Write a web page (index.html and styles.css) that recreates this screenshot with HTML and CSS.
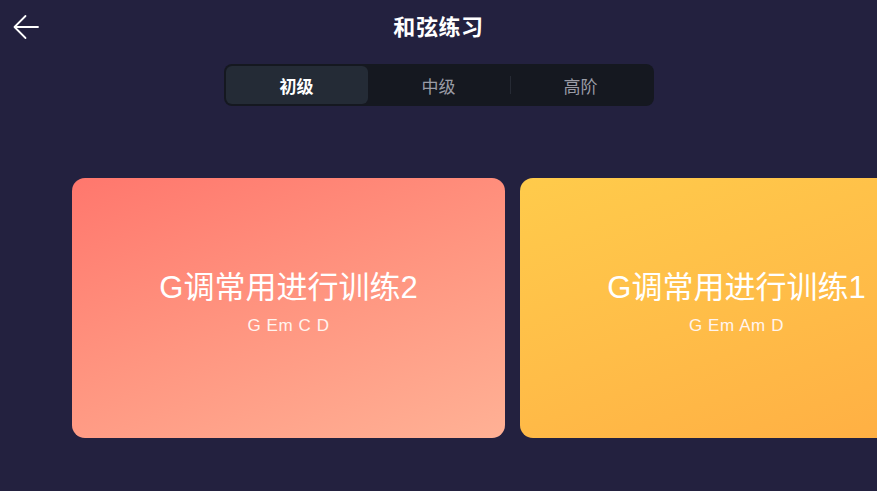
FILE: index.html
```html
<!DOCTYPE html>
<html lang="zh">
<head>
<meta charset="utf-8">
<title>和弦练习</title>
<link rel="stylesheet" href="styles.css">
</head>
<body>
<div class="page">
  <header class="topbar">
    <div class="back">
      <svg width="26" height="26" viewBox="0 0 26 26" fill="none" stroke="#ffffff" stroke-width="1.8" stroke-linecap="round" stroke-linejoin="round">
        <path d="M25 13 H2"/>
        <path d="M12.5 2 L1.5 13 L12.5 24"/>
      </svg>
    </div>
    <h1 class="title">和弦练习</h1>
    <div class="spacer"></div>
  </header>

  <nav class="tabs">
    <div class="tab active">初级</div>
    <div class="tab">中级</div>
    <div class="tab divided">高阶</div>
  </nav>

  <section class="cards">
    <div class="card coral">
      <div class="card-title">G调常用进行训练2</div>
      <div class="card-sub">G Em C D</div>
    </div>
    <div class="card amber">
      <div class="card-title">G调常用进行训练1</div>
      <div class="card-sub">G Em Am D</div>
    </div>
  </section>
</div>
</body>
</html>
```

FILE: styles.css
```css
html, body {
  margin: 0;
  padding: 0;
  background: #23213f;
}
body {
  width: 877px;
  height: 491px;
  overflow: hidden;
  font-family: "Liberation Sans", "Noto Sans CJK SC", sans-serif;
  color: #ffffff;
}
.page {
  display: flex;
  flex-direction: column;
  height: 491px;
}
.topbar {
  display: grid;
  grid-template-columns: 1fr auto 1fr;
  align-items: center;
  height: 52px;
}
.back {
  display: flex;
  align-items: center;
  padding-left: 13px;
  padding-top: 1px;
}
.back svg {
  display: block;
}
.title {
  margin: 0;
  font-family: "Noto Sans CJK SC", sans-serif;
  font-size: 22px;
  font-weight: 700;
  letter-spacing: 0.6px;
  line-height: 30px;
  margin-top: -3px;
}
.tabs {
  align-self: center;
  display: grid;
  grid-template-columns: repeat(3, 1fr);
  width: 426px;
  height: 38px;
  padding: 2px;
  margin-top: 12px;
  background: #151820;
  border-radius: 8px;
}
.tab {
  display: flex;
  align-items: center;
  justify-content: center;
  font-family: "Noto Sans CJK SC", sans-serif;
  font-size: 17px;
  color: #9a9ca6;
  border-radius: 6px;
  position: relative;
}
.tab.active {
  background: #242b36;
  color: #ffffff;
  font-weight: 700;
}
.tab.divided::before {
  content: "";
  position: absolute;
  left: 0;
  top: 10px;
  bottom: 10px;
  width: 1px;
  background: #262a34;
}
.cards {
  display: flex;
  gap: 15px;
  padding-left: 72px;
  margin-top: 72px;
  overflow: hidden;
}
.card {
  flex: 0 0 433px;
  height: 250px;
  padding-bottom: 10px;
  border-radius: 13px;
  display: flex;
  flex-direction: column;
  align-items: center;
  justify-content: center;
}
.coral {
  background: linear-gradient(160deg, #ff776d 0%, #ff9580 50%, #ffb195 100%);
}
.amber {
  background: linear-gradient(160deg, #ffcb4b 0%, #ffbd48 50%, #ffae43 100%);
}
.card-title {
  font-size: 31px;
  line-height: 36px;
  color: #ffffff;
}
.card-sub {
  margin-top: 10px;
  font-size: 17px;
  letter-spacing: 0.6px;
  line-height: 20px;
  color: #fff4ef;
}
```
